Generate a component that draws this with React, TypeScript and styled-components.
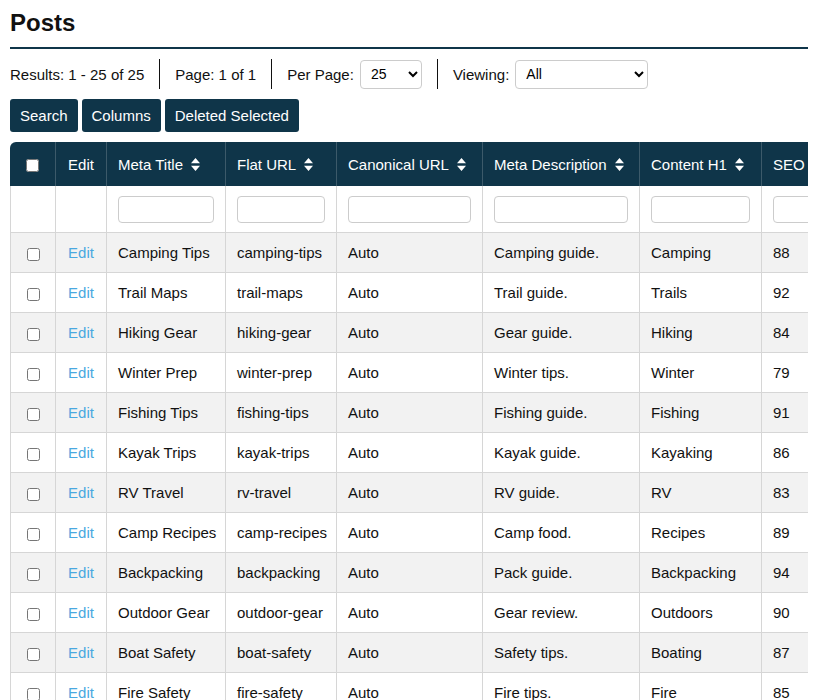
import React from "react";
import styled, { createGlobalStyle } from "styled-components";

const Global = createGlobalStyle`
  html, body { margin: 0; padding: 0; background: #fff; overflow: hidden; }
  body { font-family: "Liberation Sans", Arial, sans-serif; color: #111; }
`;

const Page = styled.div`
  padding: 8px 10px 0 10px;
  height: 700px;
  box-sizing: border-box;
  display: flex;
  flex-direction: column;
`;
const Title = styled.h1`
  margin: 0;
  font-size: 24px;
  font-weight: bold;
  line-height: 30px;
  padding-bottom: 9px;
  border-bottom: 2px solid #0f3549;
`;
const Toolbar = styled.div`
  display: flex;
  align-items: center;
  margin-top: 10px;
  height: 30px;
  font-size: 15px;
`;
const Item = styled.div<{ $first?: boolean }>`
  display: flex;
  align-items: center;
  gap: 6px;
  height: 30px;
  padding: 0 15px;
  border-left: ${(p) => (p.$first ? "none" : "1px solid #111")};
  padding-left: ${(p) => (p.$first ? "0" : "15px")};
`;
const Select = styled.select<{ $w: number }>`
  width: ${(p) => p.$w}px;
  height: 29px;
  font-family: "Liberation Sans", Arial, sans-serif;
  font-size: 14px;
  border: 1px solid #ccc;
  border-radius: 4px;
  background: #fff;
  padding: 0 6px;
`;
const Buttons = styled.div`
  display: flex;
  gap: 4px;
  margin-top: 10px;
`;
const Button = styled.button`
  height: 33px;
  padding: 0 10px;
  background: #0f3549;
  color: #fff;
  border: none;
  border-radius: 3px;
  font-family: "Liberation Sans", Arial, sans-serif;
  font-size: 15px;
`;
const Scroll = styled.div`
  margin-top: 10px;
  height: 558px;
  flex: none;
  overflow-x: scroll;
  overflow-y: hidden;
`;
const Table = styled.table<{ $w: number }>`
  width: ${(p) => p.$w}px;
  border-collapse: separate;
  border-spacing: 0;
  font-size: 15px;
  white-space: nowrap;
  table-layout: fixed;
`;
const Th = styled.th<{ $w: number }>`
  width: ${(p) => p.$w}px;
  height: 44px;
  background: #0f3549;
  color: #fff;
  font-weight: normal;
  text-align: left;
  padding: 0 11px;
  box-sizing: border-box;
  border-left: 1px solid #3c5a6a;
  &:first-child { border-left: none; border-top-left-radius: 6px; }
  &:last-child { border-top-right-radius: 6px; }
`;
const Td = styled.td<{ $center?: boolean }>`
  height: 39px;
  padding: 0 11px;
  border-left: 1px solid #d6d6d6;
  border-bottom: 1px solid #d6d6d6;
  text-align: ${(p) => (p.$center ? "center" : "left")};
  overflow: hidden;
  &:last-child { border-right: 1px solid #d6d6d6; }
`;
const FilterTd = styled(Td)`
  height: 46px;
`;
const Tr = styled.tr<{ $odd: boolean }>`
  background: ${(p) => (p.$odd ? "#f2f2f2" : "#fff")};
`;
const Filter = styled.input`
  width: 100%;
  box-sizing: border-box;
  height: 27px;
  border: 1px solid #ccc;
  border-radius: 4px;
`;
const EditLink = styled.a`
  color: #4aa8e0;
`;
const Check = styled.input`
  width: 13px;
  height: 13px;
  margin: 0;
  vertical-align: middle;
`;
const HeadInner = styled.span`
  display: inline-flex;
  align-items: center;
  gap: 8px;
`;

const SortIcon = () => (
  <svg width="9" height="13" viewBox="0 0 9 13">
    <path d="M4.5 0 L9 5.3 H0 Z M0 7.7 H9 L4.5 13 Z" fill="#fff" />
  </svg>
);

const cols: [string, number][] = [
  ["Meta Title", 119],
  ["Flat URL", 111],
  ["Canonical URL", 146],
  ["Meta Description", 157],
  ["Content H1", 122],
  ["SEO Score", 110],
  ["Status", 175],
];
const total = 45 + 51 + cols.reduce((s, c) => s + c[1], 0);

const rows = [
  ["Camping Tips", "camping-tips", "Auto", "Camping guide.", "Camping", "88"],
  ["Trail Maps", "trail-maps", "Auto", "Trail guide.", "Trails", "92"],
  ["Hiking Gear", "hiking-gear", "Auto", "Gear guide.", "Hiking", "84"],
  ["Winter Prep", "winter-prep", "Auto", "Winter tips.", "Winter", "79"],
  ["Fishing Tips", "fishing-tips", "Auto", "Fishing guide.", "Fishing", "91"],
  ["Kayak Trips", "kayak-trips", "Auto", "Kayak guide.", "Kayaking", "86"],
  ["RV Travel", "rv-travel", "Auto", "RV guide.", "RV", "83"],
  ["Camp Recipes", "camp-recipes", "Auto", "Camp food.", "Recipes", "89"],
  ["Backpacking", "backpacking", "Auto", "Pack guide.", "Backpacking", "94"],
  ["Outdoor Gear", "outdoor-gear", "Auto", "Gear review.", "Outdoors", "90"],
  ["Boat Safety", "boat-safety", "Auto", "Safety tips.", "Boating", "87"],
  ["Fire Safety", "fire-safety", "Auto", "Fire tips.", "Fire", "85"],
  ["Star Gazing", "star-gazing", "Auto", "Night sky.", "Stars", "82"],
];

export default function App() {
  return (
    <>
      <Global />
      <Page>
        <Title>Posts</Title>
        <Toolbar>
          <Item $first>Results: 1 - 25 of 25</Item>
          <Item>Page: 1 of 1</Item>
          <Item>
            Per Page:
            <Select $w={62} defaultValue="25">
              <option>25</option>
            </Select>
          </Item>
          <Item>
            Viewing:
            <Select $w={133} defaultValue="All">
              <option>All</option>
            </Select>
          </Item>
        </Toolbar>
        <Buttons>
          <Button>Search</Button>
          <Button>Columns</Button>
          <Button>Deleted Selected</Button>
        </Buttons>
        <Scroll>
          <Table $w={total}>
            <thead>
              <tr>
                <Th $w={45} style={{ textAlign: "center" }}>
                  <Check type="checkbox" />
                </Th>
                <Th $w={51} style={{ textAlign: "center" }}>Edit</Th>
                {cols.map(([c, w]) => (
                  <Th key={c} $w={w}>
                    <HeadInner>
                      {c} <SortIcon />
                    </HeadInner>
                  </Th>
                ))}
              </tr>
            </thead>
            <tbody>
              <tr>
                <FilterTd />
                <FilterTd />
                {cols.map(([c]) => (
                  <FilterTd key={c}>
                    <Filter />
                  </FilterTd>
                ))}
              </tr>
              {rows.map((r, i) => (
                <Tr key={r[0]} $odd={i % 2 === 0}>
                  <Td $center>
                    <Check type="checkbox" />
                  </Td>
                  <Td $center>
                    <EditLink>Edit</EditLink>
                  </Td>
                  {r.map((v, j) => (
                    <Td key={j}>{v}</Td>
                  ))}
                  <Td>Published</Td>
                </Tr>
              ))}
            </tbody>
          </Table>
        </Scroll>
      </Page>
    </>
  );
}
